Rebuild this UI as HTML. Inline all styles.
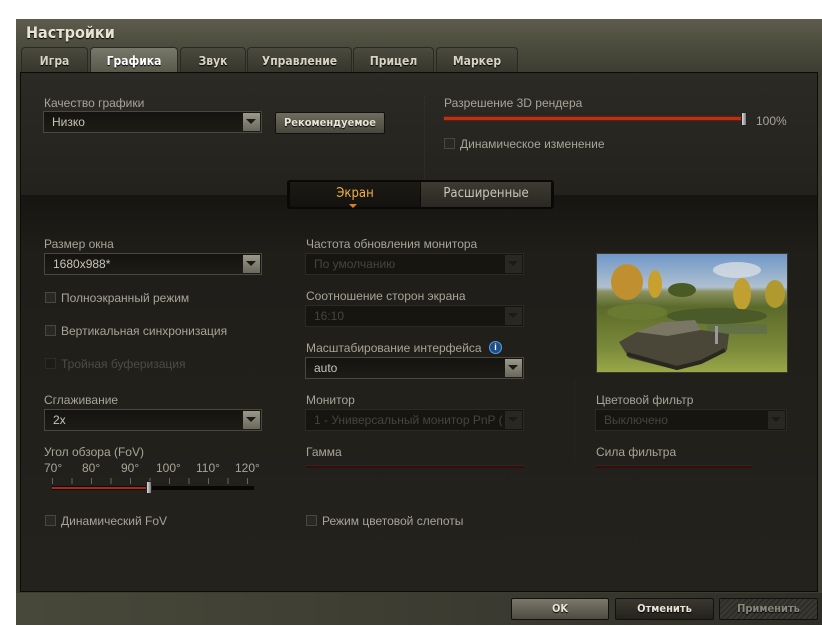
<!DOCTYPE html>
<html><head><meta charset="utf-8"><style>
*{margin:0;padding:0;box-sizing:border-box}
body{width:822px;height:626px;background:#fff;position:relative;overflow:hidden;font-family:"Liberation Sans",sans-serif;font-size:12px;color:#9a968a}
.a{position:absolute}
#win{left:16px;top:19px;width:806px;height:606px;background:linear-gradient(180deg,#5d5c4c 0,#4a4a3c 30px,#3c3c31 55px);}
.title{left:26px;top:23px;font:bold 16px "DejaVu Sans Condensed","Liberation Sans",sans-serif;color:#e8e4d4;text-shadow:0 1px 1px #000}
.tab{top:47px;height:26px;border:1px solid #2a2a22;border-bottom:none;border-radius:4px 4px 0 0;background:linear-gradient(#4a4a3e,#35352c);color:#d8d4c4;font:bold 12px "DejaVu Sans Condensed","Liberation Sans",sans-serif;text-align:center;line-height:26px;text-shadow:0 1px 1px #000}
.tab.on{background:linear-gradient(#77776a,#58584a);color:#fff}
#panel{left:20px;top:72px;width:798px;height:520px;background:#181611;border:1px solid #0c0b08}
#up{left:21px;top:73px;width:796px;height:122px;background:linear-gradient(#2b2a24,#24221d)}
#low{left:21px;top:195px;width:796px;height:396px;background:linear-gradient(#171511,#201e19 60px,#24221d)}
.lbl{color:#a8a498;font-size:12px}
.dis{color:#4e4b42}
.dd{height:22px;border:1px solid #4a473e;background:linear-gradient(#15130f,#1e1c17);color:#c8c4b8;padding-left:8px;line-height:20px;white-space:nowrap;overflow:hidden}
.dd.d{border-color:#2c2a24;color:#47443c;background:#171510}
.dd::after{content:"";position:absolute;right:1px;top:1px;width:17px;height:18px;background:linear-gradient(#9a988a,#6a685c)}
.dd::before{content:"";position:absolute;right:5px;top:7px;border-left:5px solid transparent;border-right:5px solid transparent;border-top:5px solid #1a1a16;z-index:2}
.dd.d::after{background:#2a2822}.dd.d::before{border-top-color:#1c1a16}
.cb{width:11px;height:11px;border:1px solid #4a473e;background:#2a2823}
.cbl{color:#a8a498}
.btn{height:22px;border:1px solid #111;border-radius:2px;font:bold 11px "DejaVu Sans Condensed","Liberation Sans",sans-serif;text-align:center;line-height:20px;color:#e8e4d8;text-shadow:0 1px 1px #000}
</style></head><body>
<div id="win" class="a"></div>
<div class="a title">Настройки</div>
<div class="a tab" style="left:21px;width:67px">Игра</div>
<div class="a tab on" style="left:90px;width:88px">Графика</div>
<div class="a tab" style="left:180px;width:66px">Звук</div>
<div class="a tab" style="left:247px;width:105px">Управление</div>
<div class="a tab" style="left:353px;width:81px">Прицел</div>
<div class="a tab" style="left:436px;width:82px">Маркер</div>
<div id="panel" class="a"></div>
<div id="up" class="a"></div>
<div id="low" class="a"></div>

<div class="a lbl" style="left:44px;top:96px">Качество графики</div>
<div class="a dd" style="left:43px;top:111px;width:219px">Низко</div>
<div class="a btn" style="left:275px;top:112px;width:110px;background:linear-gradient(#6e6c5e,#4a483c)">Рекомендуемое</div>
<div class="a" style="left:424px;top:96px;width:1px;height:90px;border-left:1px dotted #333"></div>
<div class="a lbl" style="left:444px;top:96px">Разрешение 3D рендера</div>
<div class="a" style="left:444px;top:117px;width:300px;height:3px;background:#c03010;box-shadow:0 0 2px #a02000"></div>
<div class="a" style="left:741px;top:112px;width:6px;height:14px;background:linear-gradient(90deg,#ddd,#777);border:1px solid #222"></div>
<div class="a lbl" style="left:756px;top:114px">100%</div>
<div class="a cb" style="left:444px;top:138px"></div>
<div class="a cbl" style="left:460px;top:137px">Динамическое изменение</div>

<div class="a" style="left:287px;top:180px;width:267px;height:29px;background:#0a0907;border-radius:3px"></div>
<div class="a" style="left:290px;top:182px;width:130px;height:25px;background:linear-gradient(#1c1a15,#14120e);color:#f0b040;font:13px 'DejaVu Sans Condensed',sans-serif;text-align:center;line-height:24px">Экран</div>
<div class="a" style="left:349px;top:204px;border-left:4px solid transparent;border-right:4px solid transparent;border-top:4px solid #e08020"></div>
<div class="a" style="left:421px;top:182px;width:130px;height:25px;background:linear-gradient(#3c3a32,#2a2822);color:#c8c4b8;font:13px 'DejaVu Sans Condensed',sans-serif;text-align:center;line-height:24px">Расширенные</div>

<div class="a lbl" style="left:44px;top:237px">Размер окна</div>
<div class="a dd" style="left:44px;top:253px;width:218px">1680x988*</div>
<div class="a cb" style="left:45px;top:292px"></div><div class="a cbl" style="left:61px;top:291px">Полноэкранный режим</div>
<div class="a cb" style="left:45px;top:325px"></div><div class="a cbl" style="left:61px;top:324px">Вертикальная синхронизация</div>
<div class="a cb" style="left:45px;top:358px;border-color:#2e2c26;background:#1e1c18"></div><div class="a dis" style="left:61px;top:357px">Тройная буферизация</div>

<div class="a lbl" style="left:306px;top:237px">Частота обновления монитора</div>
<div class="a dd d" style="left:305px;top:253px;width:219px">По умолчанию</div>
<div class="a lbl" style="left:306px;top:289px">Соотношение сторон экрана</div>
<div class="a dd d" style="left:305px;top:305px;width:219px">16:10</div>
<div class="a lbl" style="left:306px;top:341px">Масштабирование интерфейса</div>
<div class="a" style="left:489px;top:341px;width:13px;height:13px;border-radius:50%;background:#1d4f88;border:1px solid #5aa0e0;color:#fff;font:bold 9px sans-serif;text-align:center;line-height:11px">i</div>
<div class="a dd" style="left:305px;top:357px;width:219px">auto</div>

<div class="a" style="left:596px;top:253px;width:192px;height:120px;border:1px solid #3a382e;overflow:hidden;background:linear-gradient(#6f98c8 0,#b0c0d0 28%,#8a9060 32%,#5a6a2a 45%,#6a7830 60%,#7a8a3a 80%,#9aa848 100%)">
<svg width="192" height="120">
<ellipse cx="140" cy="16" rx="24" ry="8" fill="#d8dde4" opacity=".8"/>
<ellipse cx="30" cy="28" rx="16" ry="18" fill="#c09030"/><ellipse cx="58" cy="30" rx="7" ry="14" fill="#c8a030"/>
<ellipse cx="85" cy="36" rx="14" ry="7" fill="#4a5a24"/><ellipse cx="145" cy="40" rx="9" ry="16" fill="#c0a030"/><ellipse cx="178" cy="40" rx="10" ry="14" fill="#b09a30"/>
<ellipse cx="120" cy="62" rx="50" ry="8" fill="#4a5a28"/><ellipse cx="40" cy="58" rx="30" ry="8" fill="#6a7a30"/>
<rect x="110" y="70" width="60" height="10" fill="#5a6a50" opacity=".6"/>
<path d="M22 88 L40 78 L62 76 L66 68 L98 66 L104 76 L132 80 L130 96 L104 110 L80 116 L32 104 Z" fill="#4a4638"/>
<path d="M40 78 L66 68 L98 66 L104 76 L70 82 Z" fill="#7a7664"/>
<path d="M30 100 L80 114 L104 108 L128 96" stroke="#2a281e" stroke-width="4" fill="none"/>
<rect x="118" y="72" width="3" height="18" fill="#999"/></svg>
</div>

<div class="a lbl" style="left:44px;top:393px">Сглаживание</div>
<div class="a dd" style="left:44px;top:409px;width:218px">2x</div>
<div class="a lbl" style="left:44px;top:445px">Угол обзора (FoV)</div>
<div class="a lbl" style="left:44px;top:461px">70°</div><div class="a lbl" style="left:82px;top:461px">80°</div><div class="a lbl" style="left:121px;top:461px">90°</div><div class="a lbl" style="left:156px;top:461px">100°</div><div class="a lbl" style="left:196px;top:461px">110°</div><div class="a lbl" style="left:235px;top:461px">120°</div>
<div class="a" style="left:52px;top:478px;width:202px;height:6px;background:repeating-linear-gradient(90deg,#666 0 1px,transparent 1px 19.5px)"></div>
<div class="a" style="left:52px;top:486px;width:202px;height:4px;background:#0a0806"></div>
<div class="a" style="left:52px;top:487px;width:96px;height:2px;background:#b02810"></div>
<div class="a" style="left:146px;top:481px;width:6px;height:13px;background:linear-gradient(90deg,#ddd,#777);border:1px solid #222"></div>
<div class="a cb" style="left:45px;top:515px"></div><div class="a cbl" style="left:61px;top:514px">Динамический FoV</div>

<div class="a lbl" style="left:306px;top:393px">Монитор</div>
<div class="a dd d" style="left:305px;top:409px;width:219px">1 - Универсальный монитор PnP (</div>
<div class="a lbl" style="left:306px;top:445px">Гамма</div>
<div class="a" style="left:306px;top:465px;width:218px;height:3px;background:#3a0c08;border-top:1px solid #2a2a24"></div>
<div class="a cb" style="left:306px;top:515px"></div><div class="a cbl" style="left:322px;top:514px">Режим цветовой слепоты</div>
<div class="a" style="left:574px;top:380px;width:1px;height:80px;border-left:1px dotted #2a2a24"></div>

<div class="a lbl" style="left:596px;top:393px">Цветовой фильтр</div>
<div class="a dd d" style="left:595px;top:409px;width:192px">Выключено</div>
<div class="a lbl" style="left:596px;top:445px">Сила фильтра</div>
<div class="a" style="left:596px;top:465px;width:156px;height:3px;background:#3a0c08;border-top:1px solid #2a2a24"></div>

<div class="a" style="left:16px;top:593px;width:806px;height:32px;background:linear-gradient(90deg,#48483a,#3a3a30 60%,#2e2e26)"></div>
<div class="a btn" style="left:511px;top:598px;width:98px;background:linear-gradient(#7a786a,#4e4c40)">OK</div>
<div class="a btn" style="left:615px;top:598px;width:99px;background:linear-gradient(#3a3830,#24221c)">Отменить</div>
<div class="a btn" style="left:719px;top:598px;width:99px;color:#8a887c;background:repeating-linear-gradient(135deg,#3a3a32 0 2px,#2e2e28 2px 4px)">Применить</div>
</body></html>
